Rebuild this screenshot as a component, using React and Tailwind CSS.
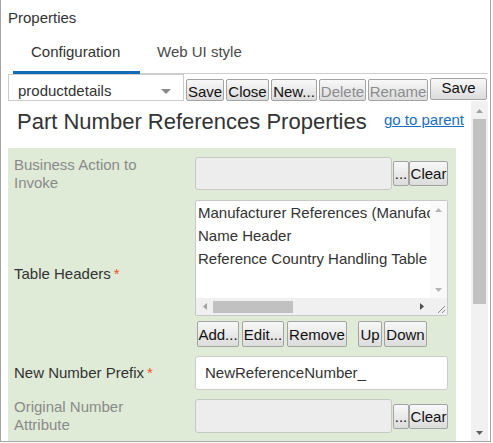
const btn =
  "border border-[#a3a3a3] rounded-[2px] bg-linear-to-b from-[#f8f8f8] to-[#dcdcdc] text-[15px] leading-[17px] flex justify-center whitespace-nowrap overflow-hidden";

function Up({ c = "#a3a3a3" }) {
  return (
    <svg width="7" height="4" viewBox="0 0 7 4">
      <polygon points="0,4 3.5,0 7,4" fill={c} />
    </svg>
  );
}
function Down({ c = "#505050" }) {
  return (
    <svg width="7" height="4" viewBox="0 0 7 4">
      <polygon points="0,0 7,0 3.5,4" fill={c} />
    </svg>
  );
}
function Left({ c = "#a3a3a3" }) {
  return (
    <svg width="4" height="7" viewBox="0 0 4 7">
      <polygon points="4,0 4,7 0,3.5" fill={c} />
    </svg>
  );
}
function Right({ c = "#505050" }) {
  return (
    <svg width="4" height="7" viewBox="0 0 4 7">
      <polygon points="0,0 0,7 4,3.5" fill={c} />
    </svg>
  );
}

function Req() {
  return <span className="ml-[3px] text-[#f0522c]">*</span>;
}

function PickerRow({ label, h }) {
  return (
    <div className={`flex items-center ${h}`}>
      <div className="w-[181px] pr-[25px] text-[15px] leading-[18px] text-[#8a8a8a]">{label}</div>
      <div className="w-[253px] flex items-center">
        <div className={`w-[197px] ${h} bg-[#ededed] border border-[#c8c8c8] rounded-[3px]`} />
        <button className={`${btn} text-[#111] ml-[1px] w-[16px] h-[25px] items-end pb-[3px]`}>...</button>
        <button className={`${btn} text-[#111] w-[39px] h-[25px] items-center`}>Clear</button>
      </div>
    </div>
  );
}

export default function App() {
  return (
    <div className="w-[493px] h-[443px] bg-white font-['Liberation_Sans',Arial,sans-serif] text-[#333]">
      <div className="w-[491px] h-[442px] border-l border-r border-b border-[#a6a6a6] flex flex-col overflow-hidden">
        {/* Title */}
        <div className="h-[26px] pt-[9px] pl-[7px] text-[15px] leading-[17px] text-[#333]">Properties</div>

        {/* Tabs */}
        <div className="h-[48px] ml-[12px] mr-[2px] border-b border-[#cfcfcf] flex items-end">
          <div className="w-[127px] pl-[18px] pb-[11px] border-b-[3px] border-[#0f6cb5] -mb-px text-[15px] leading-[17px] text-[#333]">
            Configuration
          </div>
          <div className="pl-[17px] pb-[11px] border-b-[3px] border-transparent -mb-px text-[15px] leading-[17px] text-[#4a4a4a]">
            Web UI style
          </div>
        </div>

        {/* Toolbar */}
        <div className="h-[27px] flex items-end pl-[7px] gap-[2px]">
          <div className="w-[176px] h-[27px] border border-[#cccccc] flex items-end justify-between pl-[9px] pr-[12px] pb-[1px] text-[15px] leading-[17px] text-[#333]">
            <span>productdetails</span>
            <span className="mb-[5px]">
              <svg width="10" height="5" viewBox="0 0 10 5">
                <polygon points="0,0 10,0 5,5" fill="#8a8a8a" />
              </svg>
            </span>
          </div>
          <button className={`${btn} text-[#111] w-[38px] h-[22px] pt-[3px]`}>Save</button>
          <button className={`${btn} text-[#111] w-[43px] h-[22px] pt-[3px]`}>Close</button>
          <button className={`${btn} text-[#111] w-[46px] h-[22px] pt-[3px]`}>New...</button>
          <button className={`${btn} text-[#8c8c8c] w-[47px] h-[22px] pt-[3px]`}>Delete</button>
          <button className={`${btn} text-[#8c8c8c] w-[60px] h-[22px] pt-[3px]`}>Rename</button>
          <button className={`${btn} text-[#111] w-[57px] h-[22px] mb-[1px] pt-0`}>Save</button>
        </div>

        {/* Scroll region */}
        <div className="h-[340px] flex pl-[7px] pr-[2px]">
          <div className="flex-1 overflow-hidden">
            <div className="pt-[8px] pl-[9px] pr-[7px] flex justify-between items-start">
              <div className="text-[22px] leading-[26px] text-[#333] whitespace-nowrap">Part Number References Properties</div>
              <a className="mt-[2px] text-[15px] leading-[17px] text-[#1b6ec2] underline whitespace-nowrap">go to parent</a>
            </div>

            <div className="mt-[13px] w-[448px] bg-[#dfebd7] pt-[9px] pl-[6px] pr-[8px] pb-[20px] flex flex-col">
              <PickerRow label="Business Action to Invoke" h="h-[33px]" />

              {/* Table headers */}
              <div className="mt-[10px] flex items-center">
                <div className="w-[181px] text-[15px] leading-[18px] text-[#333]">
                  Table Headers<Req />
                </div>
                <div className="w-[253px] flex flex-col">
                  <div className="w-[253px] h-[116px] border border-[#c8c8c8] rounded-[2px] bg-white flex flex-col overflow-hidden">
                    <div className="flex h-[97px]">
                      <div className="w-[234px] overflow-hidden pl-[2px] text-[15px] leading-[23px] text-[#333] whitespace-nowrap">
                        <div>Manufacturer References (Manufacturer)</div>
                        <div>Name Header</div>
                        <div>Reference Country Handling Table</div>
                      </div>
                      <div className="w-[17px] bg-[#f9f9f9] flex flex-col justify-between">
                        <div className="h-[17px] flex items-center justify-center"><Up c="#b5b5b5" /></div>
                        <div className="h-[17px] flex items-center justify-center"><Down c="#b5b5b5" /></div>
                      </div>
                    </div>
                    <div className="flex h-[17px]">
                      <div className="w-[234px] bg-[#f0f0f0] flex items-center">
                        <div className="w-[17px] h-[17px] flex items-center justify-center"><Left /></div>
                        <div className="w-[80px] h-[12px] bg-[#c1c1c1]" />
                        <div className="flex-1" />
                        <div className="w-[17px] h-[17px] flex items-center justify-center"><Right /></div>
                      </div>
                      <div className="w-[17px] bg-[#f0f0f0]">
                        <svg width="17" height="17" viewBox="0 0 17 17">
                          <line x1="15" y1="8" x2="8" y2="15" stroke="#8f8f8f" strokeWidth="1" />
                          <line x1="15" y1="12" x2="12" y2="15" stroke="#8f8f8f" strokeWidth="1" />
                        </svg>
                      </div>
                    </div>
                  </div>
                  <div className="mt-[5px] flex h-[26px]">
                    <button className={`${btn} text-[#111] ml-[2px] w-[42px] h-[26px] items-center`}>Add...</button>
                    <button className={`${btn} text-[#111] ml-[3px] w-[42px] h-[26px] items-center`}>Edit...</button>
                    <button className={`${btn} text-[#111] ml-[3px] w-[60px] h-[26px] items-center`}>Remove</button>
                    <button className={`${btn} text-[#111] ml-[11px] w-[24px] h-[26px] items-center`}>Up</button>
                    <button className={`${btn} text-[#111] ml-[2px] w-[43px] h-[26px] items-center`}>Down</button>
                  </div>
                </div>
              </div>

              {/* New number prefix */}
              <div className="mt-[9px] flex items-center h-[34px]">
                <div className="w-[181px] text-[15px] leading-[18px] text-[#333] whitespace-nowrap">
                  New Number Prefix<Req />
                </div>
                <div className="w-[253px] h-[34px] bg-white border border-[#cccccc] rounded-[3px] pl-[9px] flex items-center text-[15px] text-[#333]">
                  NewReferenceNumber_
                </div>
              </div>

              <div className="mt-[9px]">
                <PickerRow label="Original Number Attribute" h="h-[34px]" />
              </div>
            </div>
          </div>

          {/* Main scrollbar */}
          <div className="w-[17px] bg-[#f1f1f1] flex flex-col pt-[1px]">
            <div className="h-[17px] flex items-center justify-center"><Up /></div>
            <div className="mx-[2px] h-[185px] bg-[#c1c1c1]" />
            <div className="flex-1" />
            <div className="h-[17px] flex items-center justify-center"><Down c="#606060" /></div>
          </div>
        </div>
      </div>
    </div>
  );
}
